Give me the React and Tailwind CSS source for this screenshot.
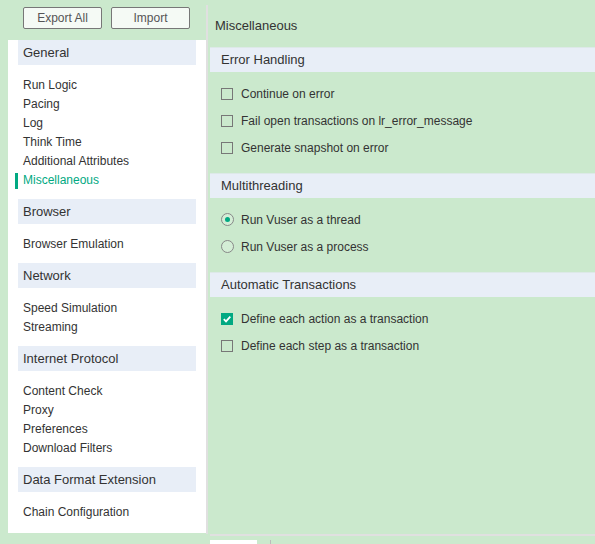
import React, { useState } from 'react';

const groups = [
  { title: 'General', items: ['Run Logic', 'Pacing', 'Log', 'Think Time', 'Additional Attributes', 'Miscellaneous'] },
  { title: 'Browser', items: ['Browser Emulation'] },
  { title: 'Network', items: ['Speed Simulation', 'Streaming'] },
  { title: 'Internet Protocol', items: ['Content Check', 'Proxy', 'Preferences', 'Download Filters'] },
  { title: 'Data Format Extension', items: ['Chain Configuration'] },
];

const Checkbox = ({ checked, label, onChange }) => (
  <label className="flex items-center h-[27px] cursor-pointer" onClick={onChange}>
    {checked ? (
      <span className="w-[12px] h-[12px] bg-[#01a982] flex items-center justify-center">
        <svg width="10" height="10" viewBox="0 0 10 10">
          <path d="M1.8 5.2 L4 7.4 L8.3 2.6" fill="none" stroke="white" strokeWidth="1.8" />
        </svg>
      </span>
    ) : (
      <span className="w-[12px] h-[12px] border border-[#777] box-border" />
    )}
    <span className="ml-[8px] text-[12px] text-[#333]">{label}</span>
  </label>
);

const Radio = ({ checked, label, onChange }) => (
  <label className="flex items-center h-[27px] cursor-pointer" onClick={onChange}>
    <span className="w-[13px] h-[13px] rounded-full border border-[#888] box-border flex items-center justify-center bg-[#d4eed6]">
      {checked && <span className="w-[5px] h-[5px] rounded-full bg-[#01a982]" />}
    </span>
    <span className="ml-[7px] text-[12px] text-[#333]">{label}</span>
  </label>
);

const Section = ({ title, children }) => (
  <div>
    <div className="h-[25px] bg-[#e8eef7] border-t border-[#dde9e8] flex items-center pl-[11px] text-[13px] text-[#333]">
      {title}
    </div>
    <div className="pt-[8px] pb-[12px] pl-[11px]">{children}</div>
  </div>
);

export default function App() {
  const [active, setActive] = useState('Miscellaneous');
  const [checks, setChecks] = useState({ cont: false, fail: false, snap: false, action: true, step: false });
  const [thread, setThread] = useState('thread');
  const toggle = (k) => setChecks((c) => ({ ...c, [k]: !c[k] }));

  return (
    <div className="w-[595px] h-[544px] bg-[#cbe9cd] flex overflow-hidden" style={{ fontFamily: '"Liberation Sans", Arial, sans-serif' }}>
      {/* left column */}
      <div className="w-[206px] flex flex-col">
        <div className="h-[40px] flex pt-[7px] pl-[23px] gap-[9px]">
          <button className="w-[79px] h-[22px] border border-[#777] rounded-[2px] bg-[#f5faf5] text-[12px] text-[#555]">Export All</button>
          <button className="w-[79px] h-[22px] border border-[#777] rounded-[2px] bg-[#f5faf5] text-[12px] text-[#555]">Import</button>
        </div>
        <div className="ml-[8px] h-[493px] bg-white px-[10px]">
          {groups.map((g) => (
            <div key={g.title}>
              <div className="h-[25px] bg-[#e8eef7] flex items-center pl-[5px] text-[13px] text-[#333]">{g.title}</div>
              <ul className="pt-[11px] pb-[9px]">
                {g.items.map((it) => (
                  <li
                    key={it}
                    onClick={() => setActive(it)}
                    className={`relative h-[19px] leading-[19px] pl-[5px] text-[12px] cursor-pointer ${active === it ? 'text-[#01a982]' : 'text-[#333]'}`}
                  >
                    {active === it && <span className="absolute left-[-3px] top-[2px] w-[3px] h-[16px] bg-[#01a982]" />}
                    {it}
                  </li>
                ))}
              </ul>
            </div>
          ))}
        </div>
      </div>

      {/* divider */}
      <div className="mt-[5px] w-[2px] h-[529px] bg-[#e0e0e0]" />

      {/* right column */}
      <div className="flex-1 flex flex-col">
        <div className="mt-[5px] h-[42px] flex items-center pl-[7px] text-[13px] text-[#333]">Miscellaneous</div>
        <div className="ml-[2px] flex-1">
          <Section title="Error Handling">
            <Checkbox label="Continue on error" checked={checks.cont} onChange={() => toggle('cont')} />
            <Checkbox label="Fail open transactions on lr_error_message" checked={checks.fail} onChange={() => toggle('fail')} />
            <Checkbox label="Generate snapshot on error" checked={checks.snap} onChange={() => toggle('snap')} />
          </Section>
          <Section title="Multithreading">
            <Radio label="Run Vuser as a thread" checked={thread === 'thread'} onChange={() => setThread('thread')} />
            <Radio label="Run Vuser as a process" checked={thread === 'process'} onChange={() => setThread('process')} />
          </Section>
          <Section title="Automatic Transactions">
            <Checkbox label="Define each action as a transaction" checked={checks.action} onChange={() => toggle('action')} />
            <Checkbox label="Define each step as a transaction" checked={checks.step} onChange={() => toggle('step')} />
          </Section>
        </div>
        <div className="ml-[2px] h-[2px] bg-[#e0e0e0]" />
        <div className="h-[8px] ml-[2px] flex items-end">
          <div className="w-[47px] h-[4px] bg-white" />
          <div className="ml-[13px] w-[1px] h-[4px] bg-[#bbb]" />
        </div>
      </div>
    </div>
  );
}
